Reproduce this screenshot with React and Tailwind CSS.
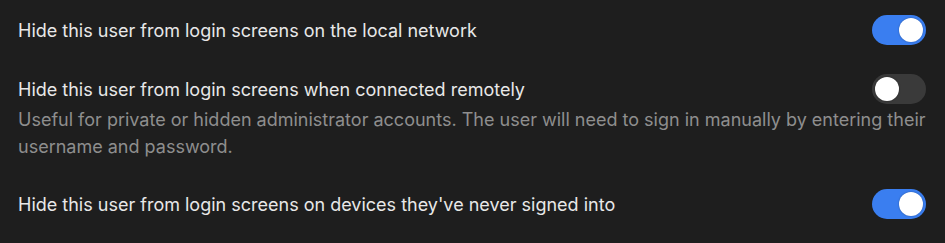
import React from "react";

function Toggle({ on }) {
  return (
    <div
      className={
        "flex h-[30px] w-[54px] shrink-0 items-center rounded-full p-[3px] " +
        (on ? "justify-end bg-[#3a7ef0]" : "justify-start bg-[#3a3a3a]")
      }
    >
      <div className="h-[24px] w-[24px] rounded-full bg-white shadow-[0_0_2px_rgba(0,0,0,0.35)]" />
    </div>
  );
}

function Row({ title, on, desc }) {
  return (
    <div>
      <div className="flex h-[30px] items-center justify-between gap-4">
        <span className="text-[#e8e8e8]">{title}</span>
        <Toggle on={on} />
      </div>
      {desc && (
        <p className="mr-[-10px] mt-[2px] leading-[27px] text-[#8e8e8e]">{desc}</p>
      )}
    </div>
  );
}

export default function App() {
  return (
    <div
      className="flex h-[243px] w-[945px] flex-col gap-[29px] bg-[#1e1e1e] pl-[18px] pr-[19px] pt-[15px] text-[18px]"
      style={{ fontFamily: "Inter, 'Noto Sans', sans-serif" }}
    >
      <Row title="Hide this user from login screens on the local network" on />
      <Row
        title="Hide this user from login screens when connected remotely"
        on={false}
        desc="Useful for private or hidden administrator accounts. The user will need to sign in manually by entering their username and password."
      />
      <Row title="Hide this user from login screens on devices they've never signed into" on />
    </div>
  );
}
